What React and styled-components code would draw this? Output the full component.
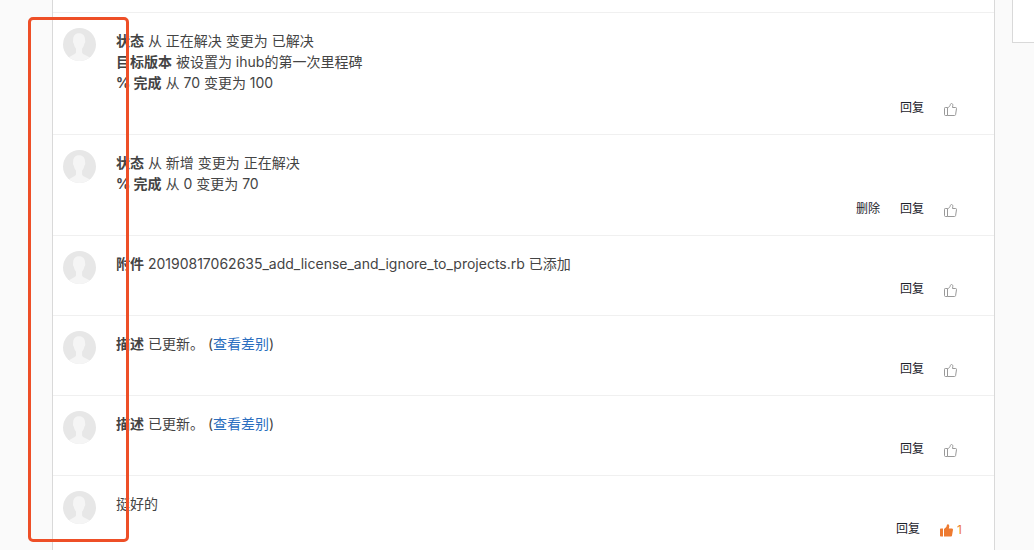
import React, { useState } from 'react';
import styled, { createGlobalStyle } from 'styled-components';

const GlobalStyle = createGlobalStyle`
    * {
        box-sizing: border-box;
    }

    body {
        margin: 0;
        background-color: #fafafa;
        color: #444444;
        font-family: Inter, 'Noto Sans CJK SC', sans-serif;
        font-size: 14px;
        line-height: 21px;
    }
`;

const Page = styled.div`
    position: relative;
    height: 100vh;
    padding-left: 52px;
    overflow: hidden;
    display: flex;
    align-items: flex-start;
    gap: 17px;
`;

const Journals = styled.main`
    flex: 1;
    min-height: 100vh;
    padding-top: 12px;
    background-color: #ffffff;
    border: solid #d9d9d9;
    border-width: 0 1px;
`;

const Sidebar = styled.aside`
    width: 22px;
    height: 43px;
    background-color: #ffffff;
    border: solid #d9d9d9;
    border-width: 0 0 1px 1px;
`;

const Entry = styled.article`
    display: flex;
    align-items: flex-start;
    gap: 20px;
    padding: 15px 32px 16px 10px;
    border-top: 1px solid #f0f0f0;
`;

const AvatarIcon = styled.svg`
    flex: none;
    width: 33px;
    height: 33px;
`;

const Content = styled.div`
    flex: 1;
    padding-top: 2px;
`;

const Line = styled.p`
    margin: 0;
`;

const Name = styled.strong`
    font-weight: 700;
`;

const DiffLink = styled.a`
    color: #2a6ebf;
    text-decoration: none;
`;

const Actions = styled.div`
    display: flex;
    justify-content: flex-end;
    align-items: center;
    gap: 20px;
    height: 20px;
    margin-top: 5px;
`;

const ActionButton = styled.button`
    padding: 0;
    border: none;
    background: none;
    color: #1c222b;
    font-family: inherit;
    font-size: 12px;
    line-height: 20px;
    cursor: pointer;
`;

const LikeButton = styled(ActionButton)`
    display: flex;
    align-items: center;
    gap: 4px;
    min-width: 18px;
    padding-top: 2px;
    color: ${props => props.$liked ? '#ee7a30' : '#999999'};
`;

const ThumbIcon = styled.svg`
    width: 13px;
    height: 13px;
`;

const Frame = styled.div`
    position: absolute;
    top: 17px;
    left: 28px;
    width: 101px;
    height: 525px;
    border: 3px solid #ee4f27;
    border-radius: 5px;
    pointer-events: none;
`;

const entries = [
    {
        id: 1,
        lines: [
            { name: '状态', text: '从 正在解决 变更为 已解决' },
            { name: '目标版本', text: '被设置为 ihub的第一次里程碑' },
            { name: '% 完成', text: '从 70 变更为 100' },
        ],
    },
    {
        id: 2,
        removable: true,
        lines: [
            { name: '状态', text: '从 新增 变更为 正在解决' },
            { name: '% 完成', text: '从 0 变更为 70' },
        ],
    },
    {
        id: 3,
        lines: [{ name: '附件', text: '20190817062635_add_license_and_ignore_to_projects.rb 已添加' }],
    },
    { id: 4, lines: [{ name: '描述', text: '已更新。', diff: true }] },
    { id: 5, lines: [{ name: '描述', text: '已更新。', diff: true }] },
    { id: 6, likes: 1, lines: [{ text: '挺好的' }] },
];

function Avatar() {
    return (
        <AvatarIcon viewBox='0 0 33 33' aria-hidden='true'>
            <clipPath id='avatar-clip'>
                <circle cx='16.5' cy='16.5' r='16.5' />
            </clipPath>
            <g clipPath='url(#avatar-clip)'>
                <rect width='33' height='33' fill='#e7e7e7' />
                <path
                    fill='#f5f5f5'
                    d='M16 5.2c3.8 0 6 2.5 6 6.2 0 1 .4 1.400.2 2.500-.2 1-.7 1.300-.9 2-.5 2.200-1.200 3.600-2.200 4.700v3.300c0 1.300.8 2 2.500 2.800l7.400 3.800V34H3.500v-3.500l6.900-3.800c1.800-1 2.600-1.600 2.600-2.800v-3.300c-1-1.200-1.700-2.600-2.100-4.700-.2-.7-.8-1-.9-2-.1-1.100.2-1.500.2-2.500 0-3.700 2-6.200 5.800-6.200z'
                />
            </g>
        </AvatarIcon>
    )
}

function Thumb({ filled }) {
    if(filled) {
        return (
            <ThumbIcon viewBox='0 0 13 13' fill='currentColor' aria-hidden='true'>
                <path d='M.8 4.500H3v8H.8a.8.8 0 0 1-.8-.8V5.300a.8.8 0 0 1 .8-.8z' />
                <path d='M4 5l2.300-2 .7-2.200C7.200.2 7.800 0 8.300.3c.8.5 1.100 1.400.9 2.400L8.800 4.500h3.100c.7 0 1.200.6 1.100 1.300l-1 5.600c-.1.700-.6 1.100-1.300 1.100H4z' />
            </ThumbIcon>
        )
    }

    return (
        <ThumbIcon viewBox='0 0 13 13' fill='none' stroke='currentColor' strokeLinejoin='round' aria-hidden='true'>
            <path d='M3.500 4.500H1.300a.8.800 0 0 0-.8.8v6.400c0 .4.4.8.8.8h2.200z' />
            <path d='M3.500 4.800C5 4.300 6 3.200 6.300 1.700 6.500.8 7 .5 7.500.5c1 0 1.400.8 1.300 1.900L8.500 4.500h3.200c.6 0 .9.500.8 1l-.9 6.100c-.1.600-.5.900-1 .9H3.500' />
        </ThumbIcon>
    )
}

function Journal({ entry }) {
    const [likes, setLikes] = useState(entry.likes || 0);
    const liked = likes > 0;

    return (
        <Entry>
            <Avatar />
            <Content>
                {entry.lines.map((line, i) => (
                    <Line key={i}>
                        {line.name && <><Name>{line.name}</Name>{' '}</>}
                        {line.text}
                        {line.diff && <> (<DiffLink href='#diff'>查看差别</DiffLink>)</>}
                    </Line>
                ))}
                <Actions>
                    {entry.removable && <ActionButton type='button'>删除</ActionButton>}
                    <ActionButton type='button'>回复</ActionButton>
                    <LikeButton
                        type='button'
                        aria-label='赞'
                        $liked={liked}
                        onClick={() => setLikes(liked ? 0 : 1)}
                    >
                        <Thumb filled={liked} />
                        {liked && <span>{likes}</span>}
                    </LikeButton>
                </Actions>
            </Content>
        </Entry>
    )
}

export default function App() {
    return (
        <>
            <GlobalStyle />
            <Page>
                <Journals>
                    {entries.map(entry => <Journal key={entry.id} entry={entry} />)}
                </Journals>
                <Sidebar />
                <Frame />
            </Page>
        </>
    )
}
